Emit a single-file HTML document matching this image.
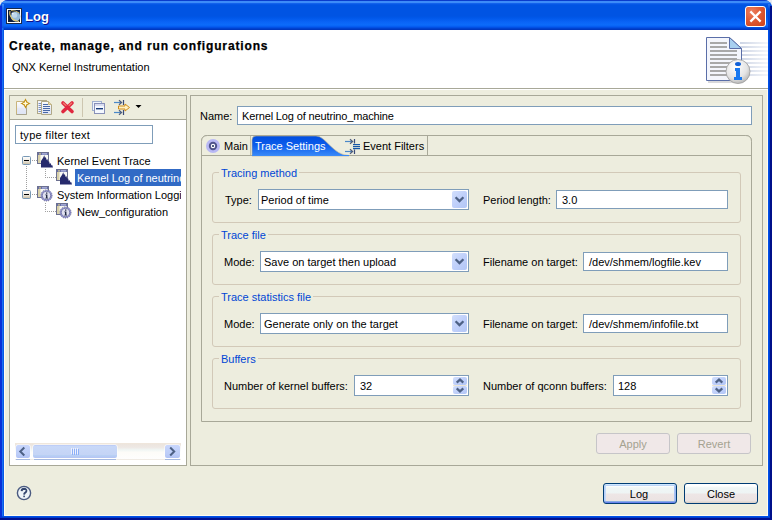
<!DOCTYPE html>
<html><head><meta charset="utf-8">
<style>
*{box-sizing:border-box;margin:0;padding:0}
html,body{width:772px;height:520px;overflow:hidden;background:#e6e9f0}
body{position:relative;font-family:"Liberation Sans",sans-serif;font-size:11px;color:#000}
.a{position:absolute}
.t{position:absolute;white-space:nowrap;line-height:13px}
#win{left:0;top:0;width:772px;height:520px;background:#0052e4;border-radius:8px 8px 0 0}
#title{left:0;top:0;width:772px;height:30px;border-radius:8px 8px 0 0;background:linear-gradient(180deg,#0a3ccc 0px,#0a3ccc 1px,#3d8cf8 1px,#3d8cf8 3px,#1a6af0 3px,#0a5ae8 4px,#0054e3 5px,#0054e3 16px,#0058ea 18px,#0a64f6 22px,#0c6cfa 25px,#0458ee 27px,#0048d8 28px,#003cc8 29px,#0034b8 30px)}
#content{left:4px;top:30px;width:764px;height:486px;background:#ededde}
#hdr{left:0;top:0;width:764px;height:58px;background:#fff}
.panel{border:1px solid #a8a898}
.field{background:#fff;border:1px solid #7f9db9}
.grp{border:1px solid #d2c9b8;border-radius:3px}
.gt{color:#0046d5;background:#ededde;padding:0 2px}
.btn{border:1px solid #003c74;border-radius:3px;background:linear-gradient(180deg,#fff 0%,#fff 10%,#f0f6f6 20%,#eef4f4 48%,#eee6e6 52%,#ebe3e2 88%,#d6cec6 100%);text-align:center;line-height:19px}
.def{box-shadow:inset 0 1px #cee7ff,inset 0 -1px #6982ee,inset 1px 0 #b8d0f8,inset -1px 0 #9cb8f0,inset 0 2px #bcd4f6,inset 0 -2px #89ade4,inset 2px 0 #c4dafa,inset -2px 0 #a8c4f4}
.dbtn{border:1px solid #c6c5c8;border-radius:3px;background:#f0e8e8;color:#a4a290;text-align:center;line-height:19px}
.dd{background:linear-gradient(180deg,#c6d6fb,#b4c8f6);border-radius:2px}
</style></head><body>
<svg width="0" height="0" style="position:absolute"><defs>
 <linearGradient id="ddg" x1="0" x2="1" y1="0" y2="1"><stop offset="0" stop-color="#d2dffc"/><stop offset="0.5" stop-color="#c0d0fa"/><stop offset="1" stop-color="#b2c6f6"/></linearGradient>
</defs></svg>
<div id="win" class="a"></div>
<div id="title" class="a"></div>
<div class="a" style="left:0;top:6px;width:2px;height:514px;background:#0830d8"></div>
<div class="a" style="left:2px;top:4px;width:2px;height:26px;background:linear-gradient(180deg,#3d8cf8,#1a6af4 20%,#1064f0 80%,#0848d8)"></div>
<div class="a" style="left:2px;top:28px;width:1px;height:490px;background:#1a70f2"></div>
<div class="a" style="left:3px;top:28px;width:1px;height:488px;background:#0858e6"></div>
<div class="a" style="left:768px;top:28px;width:1px;height:490px;background:#0050e8"></div>
<div class="a" style="left:769px;top:28px;width:1px;height:491px;background:#0040d0"></div>
<div class="a" style="left:770px;top:6px;width:2px;height:514px;background:#00108a"></div>
<div class="a" style="left:768px;top:4px;width:2px;height:26px;background:linear-gradient(180deg,#2a78f0,#0048d8 20%,#0040d0 80%,#0036c0)"></div>
<div class="a" style="left:2px;top:516px;width:767px;height:1px;background:#0050e8"></div>
<div class="a" style="left:2px;top:517px;width:768px;height:1px;background:#0040d0"></div>
<div class="a" style="left:0;top:518px;width:772px;height:2px;background:#001090"></div>
<div class="t" style="left:25px;top:9px;font-size:13px;font-weight:bold;color:#fff;text-shadow:1px 1px #0f1089;line-height:16px">Log</div>

<div id="content" class="a">
 <div class="a" style="left:0;top:60px;width:1px;height:426px;background:#fffbf0"></div>
 <div class="a" style="left:763px;top:60px;width:1px;height:426px;background:#fffbf0"></div>
 <div class="a" style="left:0;top:485px;width:764px;height:1px;background:#fffbf0"></div>
 <div id="hdr" class="a"></div>
 <div class="a" style="left:0;top:58px;width:764px;height:1px;background:#a8a898"></div>
 <div class="a" style="left:0;top:59px;width:764px;height:1px;background:#fff"></div>
</div>
<div class="t" style="left:9px;top:40px;font-size:12px;font-weight:bold;letter-spacing:0.86px;-webkit-text-stroke:0.25px #000">Create, manage, and run configurations</div>
<div class="t" style="left:12px;top:61px">QNX Kernel Instrumentation</div>

<!-- left panel -->
<div class="a panel" style="left:9px;top:95px;width:178px;height:371px"></div>
<div class="a" style="left:10px;top:119px;width:176px;height:1px;background:#a8a898"></div>
<div class="a" style="left:10px;top:120px;width:176px;height:345px;background:#fff"></div>
<div class="a field" style="left:15px;top:125px;width:138px;height:19px"></div>
<div class="t" style="left:20px;top:129px;letter-spacing:0.3px">type filter text</div>

<!-- right panel -->
<div class="a panel" style="left:190px;top:95px;width:573px;height:371px"></div>
<div class="t" style="left:200px;top:110px">Name:</div>
<div class="a field" style="left:237px;top:106px;width:515px;height:19px"></div>
<div class="t" style="left:242px;top:110px;letter-spacing:-0.14px">Kernel Log of neutrino_machine</div>

<!-- tab folder -->
<div class="a" style="left:201px;top:135px;width:551px;height:287px;border:1px solid #a8a898;border-radius:6px 6px 0 0"></div>
<svg class="a" style="left:201px;top:134px" width="551" height="23" viewBox="201 134 551 23">
 <defs>
  <linearGradient id="tabg" x1="0" x2="0" y1="0" y2="1"><stop offset="0" stop-color="#004ee0"/><stop offset="0.45" stop-color="#0c5ceb"/><stop offset="1" stop-color="#3a8af8"/></linearGradient>
 </defs>
 <path d="M201.5 156 V141.5 Q201.5 135.5 207.5 135.5 H745.5 Q751.5 135.5 751.5 141.5 V156" fill="#ededde" stroke="#a8a898" stroke-width="1"/>
 <rect x="202" y="155" width="549" height="1" fill="#a8a898"/>
 <path d="M250.5 155 V136" stroke="#c8c0a0" stroke-width="1"/>
 <path d="M252 156 V140 Q252 136 256 136 H316 C326 136 333 155.5 349 155.5 V156 Z" fill="url(#tabg)" stroke="#b8b090" stroke-width="0.6"/>
 <rect x="252" y="155" width="97" height="1" fill="#3a8af8"/>
 <path d="M427.5 136 V155" stroke="#a8a898" stroke-width="1"/>
 <!-- main icon -->
 <circle cx="213" cy="146" r="7" fill="#b8b8f4"/>
 <circle cx="213" cy="146" r="4.2" fill="#50548c"/>
 <circle cx="213" cy="146" r="2.2" fill="#fff"/>
 <circle cx="213" cy="146" r="1.1" fill="#283868"/>
 <!-- event filter icon -->
 <g fill="none" stroke-width="1.2">
  <path d="M345 141.5 H352" stroke="#4a88c8"/>
  <path d="M350 139.3 L352.6 141.5 L350 143.7" stroke="#505c78"/>
  <path d="M345 151.5 H352" stroke="#4a88c8"/>
  <path d="M350 149.3 L352.6 151.5 L350 153.7" stroke="#505c78"/>
  <path d="M354.5 139 V143.5 M354.5 149.5 V154" stroke="#3c4c78"/>
 </g>
 <g fill="#1858a8"><rect x="353" y="144" width="7" height="1.2"/><rect x="353" y="146" width="7" height="1.2"/><rect x="353" y="148" width="7" height="1.2"/></g>
</svg>
<div class="t" style="left:224px;top:140px">Main</div>
<div class="t" style="left:255px;top:140px;color:#fff">Trace Settings</div>
<div class="t" style="left:363px;top:140px">Event Filters</div>

<!-- groups -->
<div class="a grp" style="left:212px;top:172px;width:529px;height:51px"></div>
<div class="t gt" style="left:219px;top:167px">Tracing method</div>
<div class="t" style="left:225px;top:194px">Type:</div>
<div class="a field" style="left:258px;top:189px;width:211px;height:21px"></div>
<div class="t" style="left:261px;top:194px">Period of time</div>
<svg class="a" style="left:452px;top:191px" width="15" height="17" viewBox="0 0 15 17"><rect x="0" y="0" width="15" height="17" rx="2" fill="url(#ddg)"/><path d="M3.6 6.2 L7.5 10.1 L11.4 6.2" fill="none" stroke="#4d6185" stroke-width="2.3"/></svg>
<div class="t" style="left:483px;top:194px">Period length:</div>
<div class="a field" style="left:556px;top:190px;width:172px;height:19px"></div>
<div class="t" style="left:562px;top:194px">3.0</div>

<div class="a grp" style="left:212px;top:234px;width:529px;height:51px"></div>
<div class="t gt" style="left:219px;top:229px">Trace file</div>
<div class="t" style="left:224px;top:256px">Mode:</div>
<div class="a field" style="left:260px;top:251px;width:209px;height:21px"></div>
<div class="t" style="left:264px;top:256px">Save on target then upload</div>
<svg class="a" style="left:452px;top:253px" width="15" height="17" viewBox="0 0 15 17"><rect x="0" y="0" width="15" height="17" rx="2" fill="url(#ddg)"/><path d="M3.6 6.2 L7.5 10.1 L11.4 6.2" fill="none" stroke="#4d6185" stroke-width="2.3"/></svg>
<div class="t" style="left:483px;top:256px">Filename on target:</div>
<div class="a field" style="left:583px;top:252px;width:145px;height:19px"></div>
<div class="t" style="left:589px;top:256px">/dev/shmem/logfile.kev</div>

<div class="a grp" style="left:212px;top:296px;width:529px;height:51px"></div>
<div class="t gt" style="left:219px;top:291px">Trace statistics file</div>
<div class="t" style="left:224px;top:318px">Mode:</div>
<div class="a field" style="left:260px;top:313px;width:209px;height:21px"></div>
<div class="t" style="left:264px;top:318px">Generate only on the target</div>
<svg class="a" style="left:452px;top:315px" width="15" height="17" viewBox="0 0 15 17"><rect x="0" y="0" width="15" height="17" rx="2" fill="url(#ddg)"/><path d="M3.6 6.2 L7.5 10.1 L11.4 6.2" fill="none" stroke="#4d6185" stroke-width="2.3"/></svg>
<div class="t" style="left:483px;top:318px">Filename on target:</div>
<div class="a field" style="left:583px;top:314px;width:145px;height:19px"></div>
<div class="t" style="left:589px;top:318px">/dev/shmem/infofile.txt</div>

<div class="a grp" style="left:212px;top:358px;width:529px;height:51px"></div>
<div class="t gt" style="left:219px;top:353px">Buffers</div>
<div class="t" style="left:224px;top:380px">Number of kernel buffers:</div>
<div class="a field" style="left:354px;top:375px;width:115px;height:21px"></div>
<div class="t" style="left:360px;top:380px">32</div>
<svg class="a" style="left:453px;top:377px" width="14" height="17" viewBox="0 0 14 17"><rect x="0" y="0" width="14" height="8" rx="2" fill="url(#ddg)"/><rect x="0" y="9" width="14" height="8" rx="2" fill="url(#ddg)"/><rect x="-1" y="8" width="16" height="1" fill="#ece6d4"/><path d="M3.7 5.6 L7 2.6 L10.3 5.6" fill="none" stroke="#4d6185" stroke-width="2.2"/><path d="M3.7 11.4 L7 14.4 L10.3 11.4" fill="none" stroke="#4d6185" stroke-width="2.2"/></svg>
<div class="t" style="left:483px;top:380px">Number of qconn buffers:</div>
<div class="a field" style="left:613px;top:375px;width:115px;height:21px"></div>
<div class="t" style="left:618px;top:380px">128</div>
<svg class="a" style="left:712px;top:377px" width="14" height="17" viewBox="0 0 14 17"><rect x="0" y="0" width="14" height="8" rx="2" fill="url(#ddg)"/><rect x="0" y="9" width="14" height="8" rx="2" fill="url(#ddg)"/><rect x="-1" y="8" width="16" height="1" fill="#ece6d4"/><path d="M3.7 5.6 L7 2.6 L10.3 5.6" fill="none" stroke="#4d6185" stroke-width="2.2"/><path d="M3.7 11.4 L7 14.4 L10.3 11.4" fill="none" stroke="#4d6185" stroke-width="2.2"/></svg>

<div class="a dbtn" style="left:596px;top:433px;width:74px;height:21px;padding-top:1px">Apply</div>
<div class="a dbtn" style="left:677px;top:433px;width:74px;height:21px;padding-top:1px">Revert</div>

<div class="a btn def" style="left:603px;top:483px;width:74px;height:21px;padding-top:1px;text-indent:-2px">Log</div>
<div class="a btn" style="left:684px;top:483px;width:74px;height:21px;padding-top:1px">Close</div>

<!-- title icon -->
<svg class="a" style="left:6px;top:8px" width="16" height="16" viewBox="0 0 16 16">
 <rect x="0" y="0" width="16" height="16" fill="#1c2a48"/>
 <rect x="1" y="1" width="14" height="14" fill="#fff"/>
 <rect x="2" y="2" width="12" height="12" fill="#0e1e3e"/>
 <circle cx="9.6" cy="8.6" r="4.8" fill="#98bcd8"/>
 <circle cx="8.6" cy="7.2" r="2.6" fill="#c0d8ec"/>
 <circle cx="6.6" cy="5.6" r="1" fill="#f0f8ff"/>
 <path d="M4 3 Q3 7 6 10.5 Q9 13.5 13 13.5" fill="none" stroke="#e8cc6c" stroke-width="1.1"/>
 <path d="M5 2.5 Q10 2.5 13.5 5" fill="none" stroke="#d8bc60" stroke-width="0.9"/>
</svg>
<!-- close button -->
<div class="a" style="left:745px;top:6px;width:21px;height:21px;border:1px solid #fff;border-radius:3px;background:radial-gradient(circle at 30% 25%,#ec8060 0%,#e05a34 45%,#cc4218 100%)"></div>
<svg class="a" style="left:745px;top:6px" width="21" height="21" viewBox="0 0 21 21">
 <path d="M6.2 6.2 L14.8 14.8 M14.8 6.2 L6.2 14.8" stroke="#fff" stroke-width="2.3" stroke-linecap="square"/>
</svg>
<!-- header icon -->
<svg class="a" style="left:704px;top:34px" width="64" height="52" viewBox="0 0 64 52">
 <defs>
  <linearGradient id="stripe" x1="0" x2="1" y1="0" y2="0"><stop offset="0" stop-color="#cdd5e5"/><stop offset="1" stop-color="#f4f6fa"/></linearGradient>
  <radialGradient id="ball" cx="0.4" cy="0.3" r="0.8"><stop offset="0" stop-color="#ffffff"/><stop offset="0.6" stop-color="#e4e4e4"/><stop offset="1" stop-color="#a8a8a8"/></radialGradient>
 </defs>
 <g fill="url(#stripe)">
  <rect x="36" y="8" width="28" height="2"/><rect x="36" y="12" width="28" height="2"/><rect x="36" y="16" width="28" height="2"/>
  <rect x="36" y="20" width="28" height="2"/><rect x="36" y="24" width="28" height="2"/><rect x="36" y="28" width="28" height="2"/>
  <rect x="36" y="32" width="28" height="2"/><rect x="36" y="36" width="28" height="2"/><rect x="36" y="40" width="28" height="2"/>
 </g>
 <rect x="4" y="47" width="30" height="2" fill="#c8c8cc" opacity="0.7"/>
 <path d="M2.5 3.5 H25.5 L37.5 14.5 V46.5 H2.5 Z" fill="#f4f6fc" stroke="#5a6ea8" stroke-width="1"/>
 <path d="M25.5 3.5 V14.5 H37.5 Z" fill="#a8d0f0" stroke="#5a6ea8" stroke-width="1"/>
 <g fill="#a8a8a8">
  <rect x="6" y="8" width="17" height="2"/><rect x="6" y="12" width="17" height="2"/><rect x="6" y="16" width="27" height="2"/>
  <rect x="6" y="20" width="27" height="2"/><rect x="6" y="24" width="27" height="2"/><rect x="6" y="28" width="27" height="2"/>
  <rect x="6" y="32" width="27" height="2"/><rect x="6" y="36" width="27" height="2"/><rect x="6" y="40" width="27" height="2"/>
 </g>
 <circle cx="34" cy="37.5" r="12" fill="url(#ball)" stroke="#9a9a9a" stroke-width="0.8"/>
 <ellipse cx="34" cy="30" rx="3" ry="2" fill="#1060d8"/>
 <path d="M31 34 H36 V43 H38 V46 H30 V43 H32 V37 H31 Z" fill="#1878f0"/>
</svg>

<!-- toolbar icons -->
<svg class="a" style="left:10px;top:96px" width="176" height="23" viewBox="10 96 176 23">
 <defs>
  <linearGradient id="pg" x1="0" x2="0" y1="0" y2="1"><stop offset="0" stop-color="#fafbfd"/><stop offset="0.45" stop-color="#eef0f8"/><stop offset="0.55" stop-color="#e4e8f6"/><stop offset="1" stop-color="#dfe5f5"/></linearGradient>
 </defs>
 <!-- new -->
 <path d="M16.5 101.5 H24 M16.5 101.5 V114.5 H26.5 V106" fill="none" stroke="#c8b47c" stroke-width="1"/>
 <rect x="17" y="102" width="9" height="12" fill="url(#pg)"/>
 <path d="M16.5 114.5 H26.5 V108" fill="none" stroke="#a8a490" stroke-width="1"/>
 <path d="M25.5 99.8 Q26.5 102.5 29.2 103.5 Q26.5 104.5 25.5 107.2 Q24.5 104.5 21.8 103.5 Q24.5 102.5 25.5 99.8 Z" fill="#f0d070" stroke="#c09018" stroke-width="1.1"/>
 <path d="M25.5 101.3 V105.7 M23.3 103.5 H27.7" stroke="#fffae0" stroke-width="1"/>
 <!-- copy -->
 <rect x="37.5" y="100.5" width="9" height="13" fill="#f4f4f8" stroke="#b0a888" stroke-width="1"/>
 <g stroke="#7890c4" stroke-width="1"><path d="M38.5 103.5H41 M38.5 105.5H41 M38.5 107.5H41 M38.5 109.5H41 M38.5 111.5H41"/></g>
 <path d="M41.5 101.5 H48.5 L51.5 104.5 V114.5 H41.5 Z" fill="url(#pg)" stroke="#b0a888" stroke-width="1"/>
 <path d="M48.5 101.5 V104.5 H51.5" fill="#e8d8a8" stroke="#c8b880" stroke-width="1"/>
 <g stroke="#4868a8" stroke-width="1"><path d="M43 104.5H48 M43 106.5H50 M43 108.5H50 M43 110.5H50 M43 112.5H48"/></g>
 <!-- delete -->
 <path d="M63 103 L72 111.5 M72 103 L63 111.5" stroke="#e02840" stroke-width="3.6" stroke-linecap="round"/>
 <path d="M63.3 103 L66 105.5 M71.7 103 L69 105.5" stroke="#f08070" stroke-width="1.1" stroke-linecap="round"/>
 <!-- separator -->
 <rect x="82" y="98" width="1" height="19" fill="#cdc6b0"/>
 <!-- collapse -->
 <rect x="92.5" y="101.5" width="9" height="9" fill="#eef4fc" stroke="#a0b0d0" stroke-width="1"/>
 <rect x="94.5" y="103.5" width="10" height="10" fill="#f4f8ff" stroke="#8890b8" stroke-width="1"/>
 <rect x="95" y="104" width="9" height="2" fill="#d8dcf0"/>
 <rect x="96" y="108" width="7" height="1.4" fill="#183c7c"/>
 <!-- filter -->
 <g stroke-width="1.2" fill="none">
  <path d="M114 102.5 H121" stroke="#4a88c8"/>
  <path d="M119 100.3 L121.6 102.5 L119 104.7" stroke="#505c78"/>
  <path d="M114 112.5 H121" stroke="#4a88c8"/>
  <path d="M119 110.3 L121.6 112.5 L119 114.7" stroke="#505c78"/>
  <path d="M123.5 100 V105 M123.5 110 V115" stroke="#3c4c78"/>
 </g>
 <path d="M118.5 106 H125 V104 L129.5 107.5 L125 111 V109 H118.5 Z" fill="#fff0c0" stroke="#d08c18" stroke-width="1"/>
 <!-- dropdown triangle -->
 <path d="M135.5 105 H141.5 L138.5 108 Z" fill="#000"/>
</svg>

<!-- tree -->
<svg class="a" style="left:10px;top:145px" width="176" height="80" viewBox="10 145 176 80">
 <defs>
  <linearGradient id="exp" x1="0" x2="0" y1="0" y2="1"><stop offset="0" stop-color="#ffffff"/><stop offset="0.5" stop-color="#f0ece4"/><stop offset="1" stop-color="#c8bca0"/></linearGradient>
  <symbol id="wnd" viewBox="0 0 16 16">
   <rect x="0.5" y="0.5" width="11" height="11" fill="#f8f8f4" stroke="#6c7090" stroke-width="1"/>
   <rect x="1" y="1" width="10" height="2" fill="#6870a8"/>
   <rect x="2" y="1.4" width="2" height="1" fill="#e8d880"/>
   <rect x="5" y="1.4" width="5" height="1" fill="#c8ccf0"/>
   <rect x="1" y="3" width="2.5" height="8" fill="#d8d0a8"/>
  </symbol>
  <symbol id="mtn" viewBox="0 0 16 16">
   <path d="M4 15.5 V9 L5 7.5 L6 6 L7.3 3.2 L8 6 L8.8 5 L9.6 8 L10.4 7 L11.3 10 L12 9 L12.8 12 L13.6 11 L14.5 13.5 L15.2 13 L16 15.5 Z" fill="#262a6c"/>
  </symbol>
  <symbol id="inf" viewBox="0 0 16 16">
   <circle cx="9.5" cy="9.5" r="5.6" fill="#9898d8" stroke="#505070" stroke-width="0.8" stroke-dasharray="1 1"/>
   <circle cx="9.5" cy="9.5" r="4.2" fill="#e0e0f0" stroke="#6c70a0" stroke-width="0.8"/>
   <rect x="9" y="6.5" width="1.4" height="1.2" fill="#202840"/>
   <path d="M8.3 8.5 H10.4 V11.8 H11 V12.5 H8.3 V11.8 H9 V9.2 H8.3 Z" fill="#202840"/>
  </symbol>
 </defs>
 <g fill="#a0a0a0">
  <!-- dotted lines -->
  <path d="M32 160h1v1h-1z M34 160h1v1h-1z M36 160h1v1h-1z" />
  <path d="M26 166h1v1h-1z M26 168h1v1h-1z M26 170h1v1h-1z M26 172h1v1h-1z M26 174h1v1h-1z M26 176h1v1h-1z M26 178h1v1h-1z M26 180h1v1h-1z M26 182h1v1h-1z M26 184h1v1h-1z M26 186h1v1h-1z M26 188h1v1h-1z"/>
  <path d="M45 169h1v1h-1z M45 171h1v1h-1z M45 173h1v1h-1z M45 175h1v1h-1z M45 177h1v1h-1z M47 177h1v1h-1z M49 177h1v1h-1z M51 177h1v1h-1z M53 177h1v1h-1z M55 177h1v1h-1z"/>
  <path d="M32 194h1v1h-1z M34 194h1v1h-1z M36 194h1v1h-1z" />
  <path d="M45 203h1v1h-1z M45 205h1v1h-1z M45 207h1v1h-1z M45 209h1v1h-1z M45 211h1v1h-1z M47 211h1v1h-1z M49 211h1v1h-1z M51 211h1v1h-1z M53 211h1v1h-1z M55 211h1v1h-1z"/>
 </g>
 <!-- expanders -->
 <rect x="22.5" y="156.5" width="8" height="8" rx="1" fill="url(#exp)" stroke="#7898b5" stroke-width="1"/>
 <rect x="24" y="160" width="5" height="1" fill="#000"/>
 <rect x="22.5" y="190.5" width="8" height="8" rx="1" fill="url(#exp)" stroke="#7898b5" stroke-width="1"/>
 <rect x="24" y="194" width="5" height="1" fill="#000"/>
 <!-- icons -->
 <use href="#wnd" x="37" y="152" width="16" height="16"/>
 <use href="#mtn" x="37" y="152" width="16" height="16"/>
 <rect x="75" y="169" width="106" height="17" fill="#316ac5"/>
 <use href="#wnd" x="56" y="169" width="16" height="16"/>
 <use href="#mtn" x="56" y="169" width="16" height="16"/>
 <use href="#wnd" x="37" y="186" width="16" height="16"/>
 <use href="#inf" x="37" y="186" width="16" height="16"/>
 <use href="#wnd" x="56" y="203" width="16" height="16"/>
 <use href="#inf" x="56" y="203" width="16" height="16"/>
</svg>
<div class="a" style="left:57px;top:155px;width:124px;height:64px;overflow:hidden">
 <div class="t" style="left:0;top:0">Kernel Event Trace</div>
 <div class="t" style="left:20px;top:17px;color:#fff">Kernel Log of neutrino_machine</div>
 <div class="t" style="left:0;top:34px">System Information Logging</div>
 <div class="t" style="left:20px;top:51px">New_configuration</div>
</div>

<!-- scrollbar -->
<svg class="a" style="left:15px;top:443px" width="166" height="17" viewBox="15 443 166 17">
 <defs>
  <linearGradient id="sbb" x1="0" x2="0" y1="0" y2="1"><stop offset="0" stop-color="#c8d6fc"/><stop offset="0.7" stop-color="#bccdf8"/><stop offset="1" stop-color="#b0c2f4"/></linearGradient>
  <linearGradient id="sbt" x1="0" x2="0" y1="0" y2="1"><stop offset="0" stop-color="#b8c8f6"/><stop offset="0.12" stop-color="#c8d8f8"/><stop offset="0.75" stop-color="#c4d4f6"/><stop offset="0.8" stop-color="#b8d0f4"/><stop offset="1" stop-color="#b4c4f4"/></linearGradient>
  <linearGradient id="trk" x1="0" x2="0" y1="0" y2="1"><stop offset="0" stop-color="#ece4dc"/><stop offset="0.25" stop-color="#eee8e4"/><stop offset="0.4" stop-color="#f0f6f4"/><stop offset="0.55" stop-color="#fdfcf8"/><stop offset="1" stop-color="#fefefe"/></linearGradient>
 </defs>
 <rect x="15" y="443" width="166" height="17" fill="url(#trk)"/>
 <rect x="15" y="443" width="166" height="1" fill="#efe6dc"/>
 <rect x="15" y="459" width="166" height="1" fill="#f0ebe4"/>
 <!-- left btn -->
 <rect x="15.5" y="444.5" width="15" height="15" rx="2" fill="#fff"/>
 <rect x="16" y="445" width="14" height="13" rx="2" fill="url(#sbb)"/>
 <rect x="16" y="459" width="14" height="1" fill="#a4b8e0"/>
 <path d="M24.3 447.5 L20.3 451.5 L24.3 455.5" fill="none" stroke="#4d6185" stroke-width="2"/>
 <!-- thumb -->
 <rect x="32.5" y="444.5" width="85" height="15" rx="2" fill="#fff"/>
 <rect x="33" y="445" width="84" height="13" rx="2" fill="url(#sbt)"/>
 <rect x="34" y="459" width="82" height="1" fill="#a4b8e0"/>
 <g fill="#eef0fc"><rect x="71" y="448" width="1" height="6"/><rect x="73" y="448" width="1" height="6"/><rect x="75" y="448" width="1" height="6"/><rect x="77" y="448" width="1" height="6"/></g>
 <g fill="#8cb0f8"><rect x="72" y="449" width="1" height="6"/><rect x="74" y="449" width="1" height="6"/><rect x="76" y="449" width="1" height="6"/><rect x="78" y="449" width="1" height="6"/></g>
 <!-- right btn -->
 <rect x="164.5" y="444.5" width="16" height="15" rx="2" fill="#fff"/>
 <rect x="165" y="445" width="15" height="13" rx="2" fill="url(#sbb)"/>
 <rect x="165" y="459" width="15" height="1" fill="#a4b8e0"/>
 <path d="M170.2 447.5 L174.2 451.5 L170.2 455.5" fill="none" stroke="#4d6185" stroke-width="2"/>
</svg>
<!-- help icon -->
<svg class="a" style="left:16px;top:485px" width="16" height="16" viewBox="0 0 16 16">
 <circle cx="8" cy="8" r="6.6" fill="#eef4f8" stroke="#4a5a80" stroke-width="1.4"/>
 <path d="M5.6 6.2 Q5.8 3.8 8.1 3.8 Q10.5 3.9 10.4 5.9 Q10.3 7.1 9 7.8 Q8.2 8.3 8.1 9.6" fill="none" stroke="#34466e" stroke-width="1.9"/>
 <rect x="7.3" y="10.6" width="1.6" height="1.6" fill="#34466e"/>
</svg>

</body></html>
